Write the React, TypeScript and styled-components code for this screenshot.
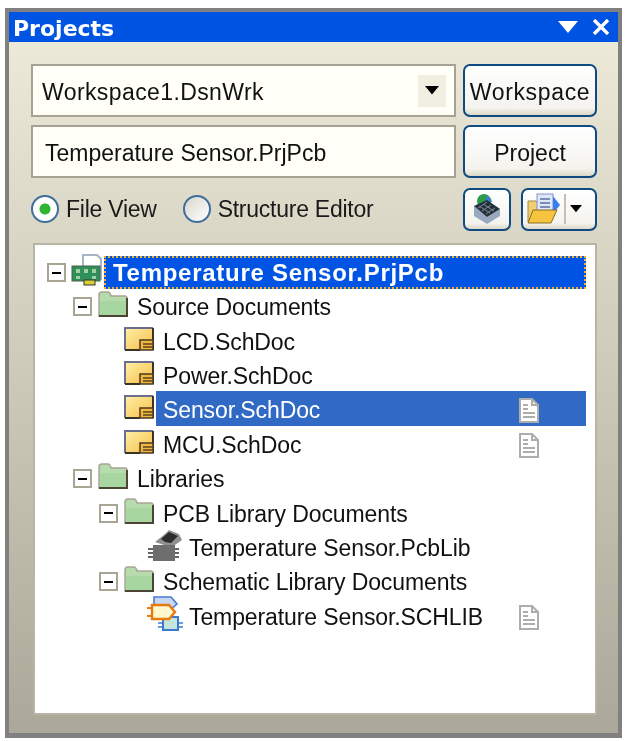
import React from 'react';
import styled, { createGlobalStyle } from 'styled-components';

const GlobalStyle = createGlobalStyle`
  html, body {
    margin: 0;
    background: #ffffff;
  }
  body {
    font-family: "Liberation Sans", sans-serif;
  }
`;

const Panel = styled.div`
  box-sizing: border-box;
  width: 617px;
  height: 730px;
  margin: 8px 0 0 5px;
  border: 4px solid #808080;
  border-bottom-width: 5px;
  display: flex;
  flex-direction: column;
  filter: blur(0.6px);
`;

const TitleBar = styled.div`
  flex: none;
  box-sizing: border-box;
  height: 30px;
  background: #0054e3;
  display: flex;
  align-items: center;
  justify-content: space-between;
  padding: 3px 8px 0 4px;
  color: #ffffff;
  font: bold 22px "DejaVu Sans", sans-serif;
`;

const TitleIcons = styled.div`
  display: flex;
  align-items: center;
  gap: 14px;
  margin-top: -3px;
`;

const Body = styled.div`
  flex: 1;
  min-height: 0;
  display: flex;
  flex-direction: column;
  padding: 22px 21px 18px 22px;
  background: linear-gradient(#ece9d8, #aca899);
`;

const FieldRow = styled.div`
  display: grid;
  grid-template-columns: 425px 134px;
  gap: 7px;
  height: 53px;
  margin-bottom: 8px;
`;

const Field = styled.div<{ $inset: number }>`
  box-sizing: border-box;
  border: 2px solid #a5a294;
  background: #fffff8;
  display: flex;
  align-items: center;
  justify-content: space-between;
  font: 23px "Liberation Sans", sans-serif;
  color: #111111;
  padding: 0 8px 0 ${(p) => p.$inset}px;
`;

const FieldText = styled.span<{ $track?: number }>`
  margin-top: 4px;
  letter-spacing: ${(p) => p.$track ?? 0}px;
`;

const ComboArrow = styled.span`
  width: 28px;
  height: 32px;
  background: #f1efe2;
  display: flex;
  align-items: center;
  justify-content: center;
`;

const Btn = styled.div<{ $track?: number }>`
  box-sizing: border-box;
  border: 2px solid #0f4a80;
  border-radius: 7px;
  background: linear-gradient(#ffffff, #f4f3ee 85%, #dcd8c8);
  display: flex;
  align-items: center;
  justify-content: center;
  padding-top: 3px;
  font: 23px "Liberation Sans", sans-serif;
  letter-spacing: ${(p) => p.$track ?? 0}px;
  color: #111111;
`;

const OptionRow = styled.div`
  display: flex;
  align-items: center;
  height: 44px;
  margin-top: 1px;
`;

const Radio = styled.label`
  display: flex;
  align-items: center;
  gap: 7px;
  font: 23px "Liberation Sans", sans-serif;
  letter-spacing: -0.25px;
  color: #1a1a1a;
  margin-right: 26px;
`;

const RadioDot = styled.span<{ $on?: boolean }>`
  box-sizing: border-box;
  width: 28px;
  height: 28px;
  border-radius: 50%;
  border: 2px solid #3f6f9c;
  background: ${(p) =>
    p.$on
      ? 'radial-gradient(circle, #2fb52f 0 5px, #ffffff 6px)'
      : 'linear-gradient(135deg, #d8d6cc, #ffffff)'};
`;

const ToolGroup = styled.div`
  margin-left: auto;
  display: flex;
  gap: 10px;
`;

const ToolBtn = styled(Btn)<{ $w: number }>`
  width: ${(p) => p.$w}px;
  height: 43px;
  padding-top: 0;
`;

const SplitToolBtn = styled(ToolBtn)`
  justify-content: flex-start;
  padding-left: 4px;
`;

const Divider = styled.span`
  flex: none;
  width: 2px;
  height: 30px;
  background: #c4c1b2;
  margin: 0 4px 0 3px;
`;

const Tree = styled.div`
  flex: 1;
  min-height: 0;
  margin: 12px 0 0 2px;
  border: 2px solid #b8b5a6;
  background: #ffffff;
  padding-top: 11px;
  box-sizing: border-box;
`;

const Row = styled.div<{ $level: number }>`
  height: 34.4px;
  display: flex;
  align-items: center;
  padding-left: ${(p) => 12 + p.$level * 26}px;
  width: 551px;
  box-sizing: border-box;
`;

const Expander = styled.span`
  box-sizing: border-box;
  flex: none;
  width: 19px;
  height: 19px;
  margin-top: 3px;
  margin-right: 4px;
  border: 2px solid #a8a595;
  background: #ffffff;
  display: flex;
  align-items: center;
  justify-content: center;
  &::before {
    content: '';
    width: 9px;
    height: 2px;
    background: #000000;
  }
`;

const NoExpander = styled.span`
  flex: none;
  width: 23px;
`;

const IconSlot = styled.span`
  flex: none;
  width: 31px;
  margin-left: 1px;
  padding-bottom: 2px;
  display: flex;
  align-items: center;
  justify-content: center;
  svg {
    flex: none;
  }
`;

const Label = styled.span<{ $selected?: boolean }>`
  flex: 1;
  height: 100%;
  box-sizing: border-box;
  display: flex;
  align-items: center;
  justify-content: space-between;
  padding: 5px 47px 0 7px;
  margin-left: 2px;
  font: 23px "Liberation Sans", sans-serif;
  letter-spacing: -0.1px;
  color: ${(p) => (p.$selected ? '#ffffff' : '#111111')};
  background: ${(p) => (p.$selected ? '#316ac5' : 'transparent')};
`;

const RootRow = styled(Row)`
  height: 33px;
  margin-bottom: -1px;
  ${Expander} {
    margin-top: 0;
  }
  ${IconSlot} {
    padding-bottom: 5px;
  }
`;

const RootLabel = styled.span`
  flex: 1;
  height: 100%;
  box-sizing: border-box;
  display: flex;
  align-items: center;
  padding-left: 7px;
  margin-left: 2px;
  font: bold 24px "Liberation Sans", sans-serif;
  letter-spacing: 0.72px;
  color: #ffffff;
  background: #0054e3;
  border: 2px dotted #f0b030;
`;

const TriangleDown = ({ size, color }: { size: number; color: string }) => (
  <svg width={size} height={size * 0.6} viewBox="0 0 10 6">
    <path d="M0 0h10L5 6z" fill={color} />
  </svg>
);

const CloseIcon = () => (
  <svg width="18" height="16" viewBox="0 0 18 16">
    <path d="M2 1l14 14M16 1L2 15" stroke="#fff" strokeWidth="3.4" />
  </svg>
);

const FolderIcon = () => (
  <svg width="30" height="26" viewBox="0 0 30 26">
    <path d="M1 25V4q0-3 3-3h6q2 0 3 4h14q2 0 2 2v18z" fill="#b6dcae" stroke="#a8a595" strokeWidth="1.5" />
    <path d="M2 10h26v14H2z" fill="#a8d6a0" />
    <path d="M1 25h28V7" fill="none" stroke="#4d4438" strokeWidth="2" />
  </svg>
);

const SchIcon = () => (
  <svg width="30" height="24" viewBox="0 0 30 24">
    <defs>
      <linearGradient id="sch" x1="0" y1="0" x2="1" y2="1">
        <stop offset="0" stopColor="#fff0a8" />
        <stop offset="1" stopColor="#f7bd45" />
      </linearGradient>
    </defs>
    <path d="M1 23V1h28v12H16v10z" fill="url(#sch)" />
    <path d="M1 23V1h28" fill="none" stroke="#6a6f90" strokeWidth="2" />
    <path d="M1 23h15M29 1v22" fill="none" stroke="#3a3428" strokeWidth="2" />
    <path d="M16 23V13h13v10z" fill="#f2b63e" stroke="#4a3a20" strokeWidth="1.5" />
    <path d="M19 17h10M19 20h10" stroke="#5a4520" strokeWidth="1.5" />
  </svg>
);

const PcbProjectIcon = () => (
  <svg width="32" height="32" viewBox="0 0 32 32">
    <path d="M12 1h14l4 4v20H12z" fill="#ffffff" stroke="#a9b4cc" strokeWidth="2" />
    <rect x="1" y="12" width="28" height="15" fill="#2f8f5a" stroke="#4a5f4a" />
    <path d="M5 15h4v4H5zM13 15h4v4h-4zM21 15h4v4h-4zM5 22h4v3H5zM21 22h4v3h-4z" fill="#9fd0a0" />
    <rect x="13" y="26" width="11" height="5" fill="#d6d030" stroke="#333" />
  </svg>
);

const ChipIcon = () => (
  <svg width="36" height="34" viewBox="0 0 36 34">
    <path d="M8 14l10-8 4-4 10 4 3 6-10 7-8-2z" fill="#8f8f8f" />
    <path d="M14 11l8-7 9 4-7 7-6-1z" fill="#2c2c2c" />
    <rect x="6" y="17" width="22" height="16" fill="#6e6e6e" />
    <path d="M1 21h5M1 25h5M1 29h5M28 21h4M28 25h4M28 29h4" stroke="#333" strokeWidth="1.6" />
  </svg>
);

const SchLibIcon = () => (
  <svg width="36" height="36" viewBox="0 0 36 36">
    <path d="M7 1h17l6 7-7 6H7z" fill="#c8d8f4" stroke="#4a7ad0" strokeWidth="1.6" />
    <path d="M16 21h15v13H16z" fill="#c4e4dc" stroke="#3c78d0" strokeWidth="2" />
    <path d="M5 9h17l6 7-6 7H5z" fill="#fff8cc" stroke="#e87a10" strokeWidth="2.4" />
    <path d="M0 12h5M0 20h5" stroke="#e87a10" strokeWidth="2" />
    <path d="M11 27h5M11 31h5M31 27h5M31 31h5" stroke="#3c78d0" strokeWidth="1.6" />
  </svg>
);

const DocIcon = () => (
  <svg width="20" height="25" viewBox="0 0 20 25">
    <path d="M1 1h12l6 6v17H1z" fill="#ffffff" stroke="#adadad" strokeWidth="2" />
    <path d="M13 1v6h6" fill="none" stroke="#adadad" strokeWidth="2" />
    <path d="M4 7h5M4 11h5M4 15h12M4 19h12" stroke="#adadad" strokeWidth="1.8" />
  </svg>
);

const CompileIcon = () => (
  <svg width="32" height="32" viewBox="0 0 32 32">
    <circle cx="13" cy="8" r="7" fill="#2f9a4a" />
    <path d="M15 3a7 7 0 0 1 6 6h-6z" fill="#3a7fd0" />
    <path d="M3 13v10l13 8 13-8v-7l-13 8z" fill="#98a8c0" />
    <path d="M3 13L16 7l13 9-13 8z" fill="#22303a" />
    <path d="M8 13l11 7M12 11l11 7M16 9l-9 6M20 12l-9 6M24 15l-9 6" stroke="#7f8a96" strokeWidth="1" />
  </svg>
);

const OpenDocIcon = () => (
  <svg width="34" height="32" viewBox="0 0 34 32" style={{ flex: 'none' }}>
    <path d="M1 8h8l2 3h12v18H1z" fill="#f2cf6c" stroke="#9a8a50" />
    <rect x="10" y="1" width="16" height="20" fill="#dfe8fa" stroke="#7f96c8" />
    <path d="M13 6h10M13 10h10M13 14h10" stroke="#5a6fa0" strokeWidth="1.6" />
    <path d="M26 3l7 9-7 9z" fill="#3a7ff0" />
    <path d="M1 30l5-13h24l-6 13z" fill="#f7c440" stroke="#8a6a20" />
  </svg>
);

type Item = {
  level: number;
  text: string;
  icon: React.ReactNode;
  expander?: boolean;
  doc?: boolean;
  selected?: boolean;
};

const items: Item[] = [
  { level: 1, text: 'Source Documents', icon: <FolderIcon />, expander: true },
  { level: 2, text: 'LCD.SchDoc', icon: <SchIcon /> },
  { level: 2, text: 'Power.SchDoc', icon: <SchIcon /> },
  { level: 2, text: 'Sensor.SchDoc', icon: <SchIcon />, doc: true, selected: true },
  { level: 2, text: 'MCU.SchDoc', icon: <SchIcon />, doc: true },
  { level: 1, text: 'Libraries', icon: <FolderIcon />, expander: true },
  { level: 2, text: 'PCB Library Documents', icon: <FolderIcon />, expander: true },
  { level: 3, text: 'Temperature Sensor.PcbLib', icon: <ChipIcon /> },
  { level: 2, text: 'Schematic Library Documents', icon: <FolderIcon />, expander: true },
  { level: 3, text: 'Temperature Sensor.SCHLIB', icon: <SchLibIcon />, doc: true },
];

const App = () => {
  return (
    <>
      <GlobalStyle />
      <Panel>
        <TitleBar>
          <span>Projects</span>
          <TitleIcons>
            <TriangleDown size={20} color="#ffffff" />
            <CloseIcon />
          </TitleIcons>
        </TitleBar>
        <Body>
          <FieldRow>
            <Field $inset={9}>
              <FieldText $track={0.4}>Workspace1.DsnWrk</FieldText>
              <ComboArrow>
                <TriangleDown size={14} color="#000000" />
              </ComboArrow>
            </Field>
            <Btn $track={0.65}>Workspace</Btn>
          </FieldRow>
          <FieldRow>
            <Field $inset={12}>
              <FieldText>Temperature Sensor.PrjPcb</FieldText>
            </Field>
            <Btn>Project</Btn>
          </FieldRow>
          <OptionRow>
            <Radio>
              <RadioDot $on />
              File View
            </Radio>
            <Radio>
              <RadioDot />
              Structure Editor
            </Radio>
            <ToolGroup>
              <ToolBtn $w={48}>
                <CompileIcon />
              </ToolBtn>
              <SplitToolBtn $w={76}>
                <OpenDocIcon />
                <Divider />
                <TriangleDown size={12} color="#000000" />
              </SplitToolBtn>
            </ToolGroup>
          </OptionRow>
          <Tree>
            <RootRow $level={0}>
              <Expander />
              <IconSlot>
                <PcbProjectIcon />
              </IconSlot>
              <RootLabel>Temperature Sensor.PrjPcb</RootLabel>
            </RootRow>
            {items.map((item) => (
              <Row key={item.text} $level={item.level}>
                {item.expander ? <Expander /> : <NoExpander />}
                <IconSlot>{item.icon}</IconSlot>
                <Label $selected={item.selected}>
                  {item.text}
                  {item.doc && <DocIcon />}
                </Label>
              </Row>
            ))}
          </Tree>
        </Body>
      </Panel>
    </>
  );
};

export default App;
